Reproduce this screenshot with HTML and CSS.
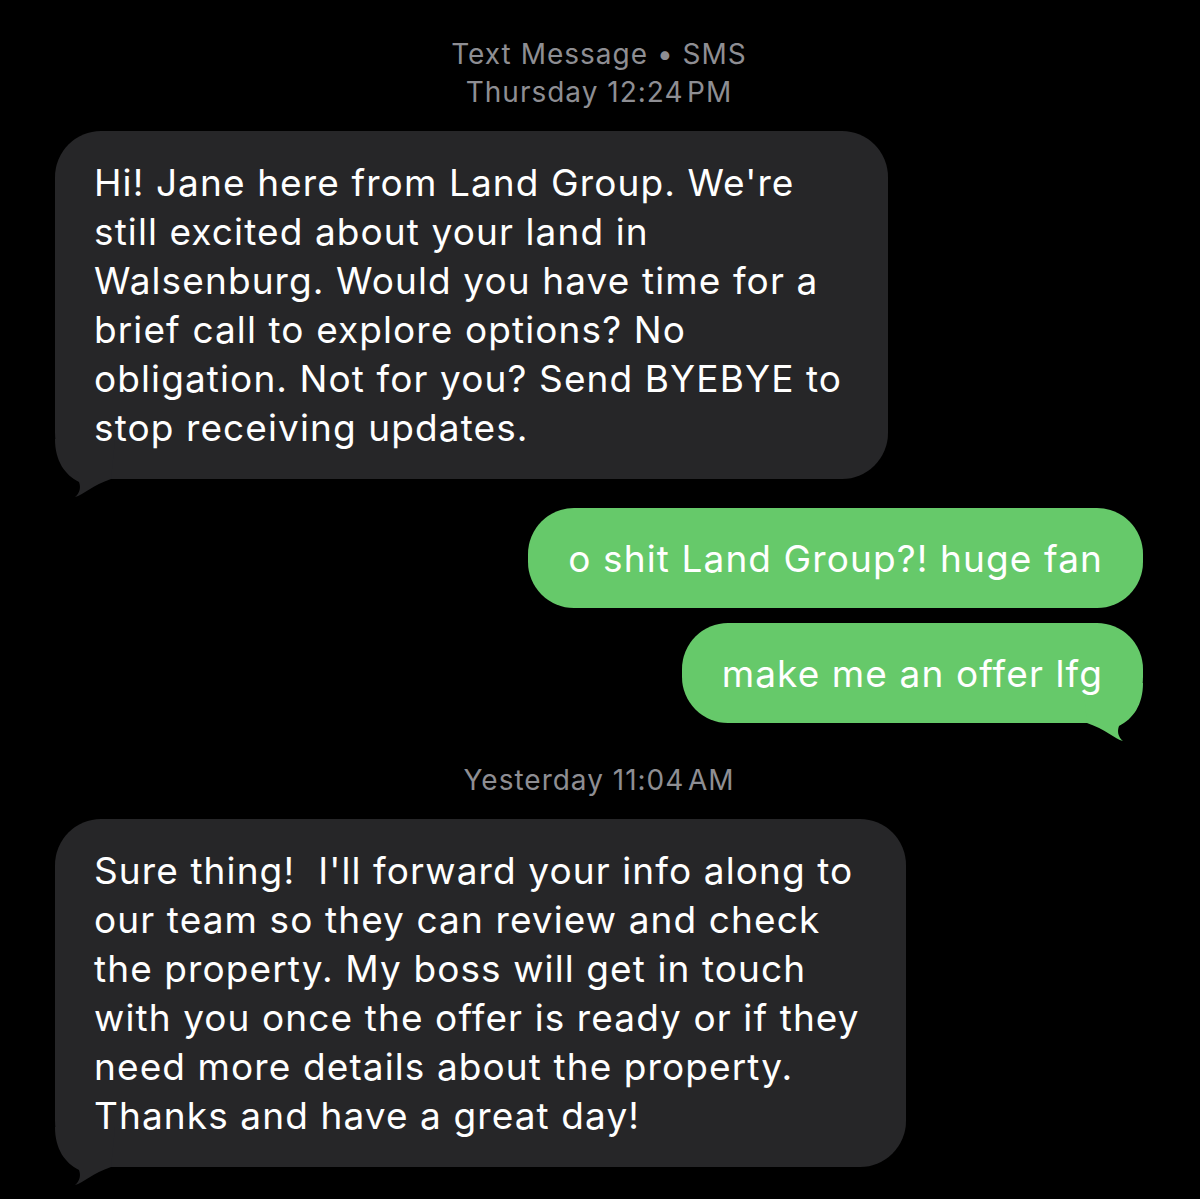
FILE: index.html
```html
<!DOCTYPE html>
<html lang="en">
<head>
  <meta charset="UTF-8">
  <meta name="viewport" content="width=device-width, initial-scale=1.0">
  <title>Messages</title>
  <link rel="stylesheet" href="styles.css">
</head>
<body>
  <!-- Conversation -->
  <main class="thread">
    <div class="stamp">
      <p>Text Message &bull; SMS</p>
      <p>Thursday 12:24&#8202;PM</p>
    </div>

    <div class="bubble in">
      <svg class="tail-mark" viewBox="0 -40 60 58" width="60" height="58"><path d="M0 -40 C0 -18 10 -4 24 3 C26 8 25 14 20 18 C28 16 38 6 56 0 L60 -40 Z"/></svg>
      <p>Hi! Jane here from Land Group. We're<br>still excited about your land in<br>Walsenburg. Would you have time for a<br>brief call to explore options? No<br>obligation. Not for you? Send BYEBYE to<br>stop receiving updates.</p>
    </div>

    <div class="group-out">
      <div class="bubble out">
        <p>o shit Land Group?! huge fan</p>
      </div>
      <div class="bubble out">
        <svg class="tail-mark" viewBox="0 -40 60 58" width="60" height="58"><path d="M0 -40 C0 -18 10 -4 24 3 C26 8 25 14 20 18 C28 16 38 6 56 0 L60 -40 Z"/></svg>
        <p>make me an offer lfg</p>
      </div>
    </div>

    <div class="stamp stamp-day">
      <p>Yesterday 11:04&#8202;AM</p>
    </div>

    <div class="bubble in">
      <svg class="tail-mark" viewBox="0 -40 60 58" width="60" height="58"><path d="M0 -40 C0 -18 10 -4 24 3 C26 8 25 14 20 18 C28 16 38 6 56 0 L60 -40 Z"/></svg>
      <p>Sure thing!&nbsp; I'll forward your info along to<br>our team so they can review and check<br>the property. My boss will get in touch<br>with you once the offer is ready or if they<br>need more details about the property.<br>Thanks and have a great day!</p>
    </div>
  </main>
</body>
</html>
```

FILE: styles.css
```css
/* Base */
* {
  margin: 0;
  padding: 0;
  box-sizing: border-box;
}

body {
  background-color: #000;
  font-family: Inter, "Open Sans", sans-serif;
  color: #fff;
  min-height: 100vh;
}

/* Thread */
.thread {
  display: flex;
  flex-direction: column;
  padding: 35px 57px 33px 55px;
}

.stamp {
  text-align: center;
  color: #8e8e93;
  font-size: 28px;
  line-height: 38px;
  letter-spacing: 1px;
  margin-bottom: 20px;
}

.stamp-day {
  margin-top: 38px;
}

/* Bubbles */
.bubble {
  position: relative;
  width: fit-content;
  border-radius: 46px;
  font-size: 37px;
  line-height: 49px;
  letter-spacing: 1.1px;
  white-space: nowrap;
}

.bubble p {
  position: relative;
}

.bubble.in {
  background-color: #262628;
  padding: 27px 46px 27px 39px;
}

.bubble.out {
  align-self: flex-end;
  background-color: #66c96a;
  padding: 26px 40px 25px 40px;
}

.group-out {
  display: flex;
  flex-direction: column;
  align-items: flex-end;
  gap: 15px;
  margin-top: 29px;
}

/* Tail */
.tail-mark {
  position: absolute;
  bottom: -18px;
  left: 0;
}

.bubble.in .tail-mark {
  fill: #262628;
}

.bubble.out .tail-mark {
  fill: #66c96a;
  left: auto;
  right: 0;
  transform: scaleX(-1);
}
```
